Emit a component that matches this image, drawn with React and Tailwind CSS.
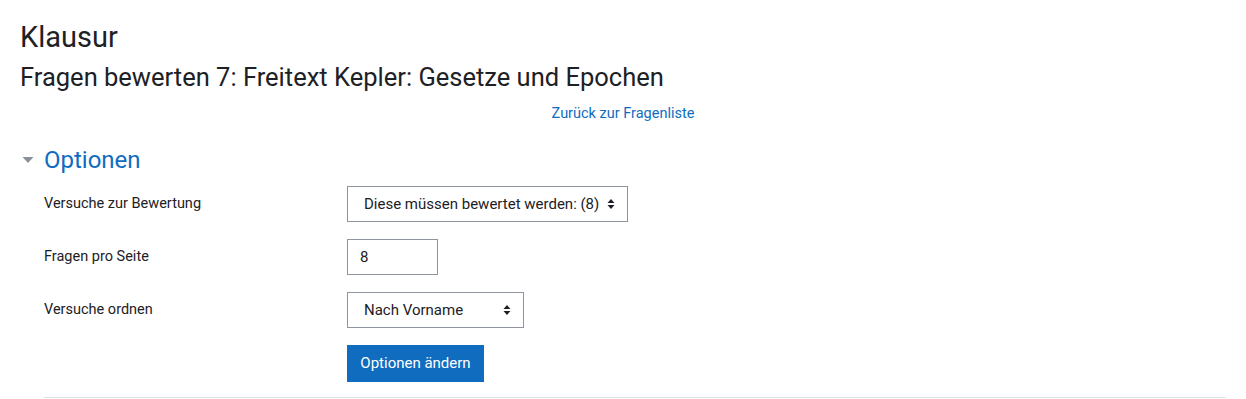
import React from "react";

function Arrows() {
  return (
    <svg width="8" height="12" viewBox="0 0 8 12" className="shrink-0">
      <path d="M4 1 L7.5 5 H0.5 Z" fill="#1d2125" />
      <path d="M4 11 L7.5 7 H0.5 Z" fill="#1d2125" />
    </svg>
  );
}

function Row({ label, children }) {
  return (
    <div className="flex items-center h-[36px] mb-[17px]">
      <div className="w-[303px] text-[14.5px]">{label}</div>
      {children}
    </div>
  );
}

export default function App() {
  return (
    <div
      className="w-[1246px] h-[399px] bg-white text-[#1d2125] overflow-hidden px-[20px]"
      style={{ fontFamily: "Roboto, 'Noto Sans', sans-serif" }}
    >
      {/* Headings */}
      <h2 className="text-[29px] leading-[36px] pt-[19px]">Klausur</h2>
      <h3 className="text-[25.5px] leading-[30px] mt-[7px]">
        Fragen bewerten 7: Freitext Kepler: Gesetze und Epochen
      </h3>
      <div className="text-center mt-[12px] leading-[18px]">
        <a href="#" className="text-[14.5px] text-[#0f6cbf]">
          Zurück zur Fragenliste
        </a>
      </div>

      {/* Optionen */}
      <div className="flex items-center h-[30px] mt-[22px]">
        <svg width="12" height="8" viewBox="0 0 12 8" className="ml-[2px] mr-[10px]">
          <path d="M0.5 1 H11.5 L6 7 Z" fill="#8a9096" />
        </svg>
        <span className="text-[24px] text-[#0f6cbf]">Optionen</span>
      </div>

      <div className="pl-[24px] mt-[11px]">
        <Row label="Versuche zur Bewertung">
          <div className="flex items-center h-[36px] w-[281px] border border-[#8f959e] pl-[16px] pr-[12px] text-[15px] justify-between">
            <span>Diese müssen bewertet werden: (8)</span>
            <Arrows />
          </div>
        </Row>
        <Row label="Fragen pro Seite">
          <div className="flex items-center h-[36px] w-[91px] border border-[#8f959e] pl-[12px] text-[15px]">
            8
          </div>
        </Row>
        <Row label="Versuche ordnen">
          <div className="flex items-center h-[36px] w-[177px] border border-[#8f959e] pl-[16px] pr-[12px] text-[15px] justify-between">
            <span>Nach Vorname</span>
            <Arrows />
          </div>
        </Row>
        <div className="flex h-[37px]">
          <div className="w-[303px]" />
          <button className="h-[37px] w-[137px] bg-[#0f6cbf] text-white text-[15px]">
            Optionen ändern
          </button>
        </div>
        <div className="border-t border-[#dee2e6] mt-[15px]" />
      </div>
    </div>
  );
}
